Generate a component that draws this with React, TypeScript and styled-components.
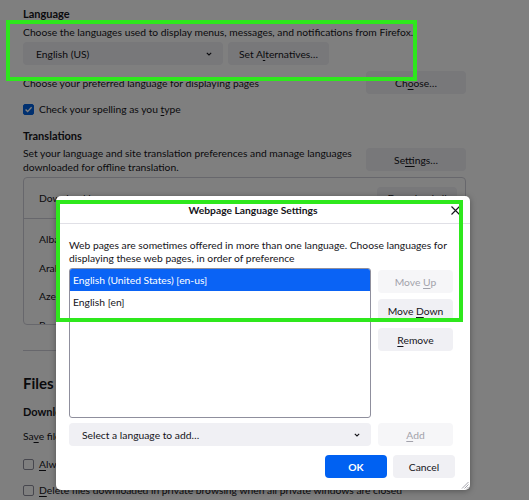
import React from "react";
import styled, { createGlobalStyle } from "styled-components";

const GlobalStyle = createGlobalStyle`
  html, body { margin: 0; padding: 0; background: #fff; }
  body {
    font-family: Lato, "Open Sans", sans-serif;
    font-size: 10.3px;
    color: #15141a;
    width: 529px;
    height: 500px;
    overflow: hidden;
  }
  * { box-sizing: border-box; }
`;

const Page = styled.div`
  position: relative;
  width: 529px;
  height: 500px;
  overflow: hidden;
  padding: 5px 63px 0 23px;
  white-space: nowrap;
`;

const Heading = styled.h2<{ $top?: number; $size?: number; $lh?: number }>`
  margin: ${(p) => p.$top ?? 0}px 0 0;
  font-size: ${(p) => p.$size ?? 11}px;
  font-weight: 700;
  line-height: ${(p) => p.$lh ?? 18}px;
`;

const Text = styled.p<{ $top?: number; $lh?: number }>`
  margin: ${(p) => p.$top ?? 0}px 0 0;
  line-height: ${(p) => p.$lh ?? 18}px;
`;

const Row = styled.div<{ $top?: number; $align?: string }>`
  display: flex;
  align-items: ${(p) => p.$align ?? "center"};
  justify-content: space-between;
  margin-top: ${(p) => p.$top ?? 0}px;
`;

const Controls = styled.div`
  display: flex;
  gap: 5px;
  margin-top: 1px;
`;

const Key = styled.span`
  text-decoration: underline;
  text-underline-offset: 2px;
`;

const Button = styled.button<{ $w?: number; $primary?: boolean; $top?: number }>`
  width: ${(p) => p.$w ?? 100}px;
  height: 23px;
  margin-top: ${(p) => p.$top ?? 0}px;
  border: none;
  border-radius: 4px;
  background: ${(p) => (p.$primary ? "#0061f2" : "#f0f0f4")};
  color: ${(p) => (p.$primary ? "#fff" : "#15141a")};
  font: inherit;
  font-weight: ${(p) => (p.$primary ? 700 : 400)};
  flex-shrink: 0;
  padding: 0;
  white-space: nowrap;
  &:disabled {
    background: #f6f6f8;
    color: #a2a2ab;
  }
`;

const Dropdown = styled.div<{ $w: number }>`
  width: ${(p) => p.$w}px;
  height: 23px;
  border-radius: 4px;
  background: #f0f0f4;
  display: flex;
  align-items: center;
  justify-content: space-between;
  padding: 0 10px 0 13px;
  flex-shrink: 0;
`;

const Chevron = () => (
  <svg width="8" height="6" viewBox="0 0 8 6">
    <path d="M1.8 1.8 L4 4 L6.2 1.8" fill="none" stroke="#15141a" strokeWidth="1.1" />
  </svg>
);

const CheckLine = styled.label<{ $top: number }>`
  display: flex;
  align-items: center;
  gap: 5px;
  margin-top: ${(p) => p.$top}px;
  line-height: 18px;
`;

const Box = styled.span<{ $checked?: boolean }>`
  width: 11px;
  height: 11px;
  border-radius: 2px;
  display: inline-flex;
  align-items: center;
  justify-content: center;
  flex-shrink: 0;
  background: ${(p) => (p.$checked ? "#0061e0" : "#fff")};
  border: 1px solid ${(p) => (p.$checked ? "#0061e0" : "#8f8f9d")};
`;

const Check = ({ checked }: { checked?: boolean }) => (
  <Box $checked={checked}>
    {checked && (
      <svg width="9" height="9" viewBox="0 0 9 9">
        <path d="M1.6 4.6 L3.6 6.6 L7.6 2.2" fill="none" stroke="#fff" strokeWidth="1.4" />
      </svg>
    )}
  </Box>
);

const LangList = styled.div`
  margin-top: 3px;
  height: 148px;
  border: 1px solid #cfcfd8;
  border-radius: 4px;
  overflow: hidden;
`;

const LangHead = styled.div`
  height: 41px;
  display: flex;
  align-items: center;
  justify-content: space-between;
  padding: 0 8px 0 15px;
  border-bottom: 1px solid #cfcfd8;
`;

const LangRows = styled.div`
  padding-top: 6px;
`;

const LangRow = styled.div`
  height: 28.5px;
  display: flex;
  align-items: center;
  justify-content: space-between;
  padding: 0 8px 0 15px;
`;

const Divider = styled.hr`
  margin: 25px 0 0;
  border: none;
  border-top: 1px solid #cfcfd8;
`;

const Shade = styled.div`
  position: absolute;
  inset: 0;
  background: rgba(0, 0, 0, 0.5);
`;

const Dialog = styled.div`
  position: absolute;
  left: 56px;
  top: 196px;
  width: 414px;
  height: 294px;
  background: #fff;
  border-radius: 5px;
  box-shadow: 0 1px 6px rgba(0, 0, 0, 0.35);
  display: flex;
  flex-direction: column;
`;

const TitleBar = styled.div`
  position: relative;
  height: 28px;
  flex-shrink: 0;
  display: flex;
  align-items: center;
  justify-content: center;
  padding-right: 20px;
  border-bottom: 1px solid #e0e0e6;
  font-weight: 700;
`;

const Close = styled.span`
  position: absolute;
  right: 10px;
  top: 10px;
  display: flex;
`;

const Body = styled.div`
  padding: 15px 17px 12px 13px;
  display: flex;
  flex-direction: column;
`;

const Grid = styled.div<{ $top: number }>`
  display: grid;
  grid-template-columns: 302px 75px;
  column-gap: 7px;
  margin-top: ${(p) => p.$top}px;
`;

const ListBox = styled.div`
  height: 150px;
  border: 1px solid #8f8f9d;
  border-radius: 3px;
  overflow: hidden;
`;

const ListItem = styled.div<{ $selected?: boolean }>`
  height: 22px;
  display: flex;
  align-items: center;
  padding-left: 3px;
  background: ${(p) => (p.$selected ? "#0a63f5" : "transparent")};
  color: ${(p) => (p.$selected ? "#fff" : "#15141a")};
`;

const SideButtons = styled.div`
  display: flex;
  flex-direction: column;
  gap: 6px;
  padding-top: 2px;
`;

const Footer = styled.div`
  display: flex;
  justify-content: flex-end;
  gap: 6px;
  margin: 9px -2px 0 0;
`;

const Grip = styled.span`
  position: absolute;
  right: 1px;
  bottom: 1px;
  display: flex;
`;

const Highlight = styled.div<{ $x: number; $y: number; $w: number; $h: number }>`
  position: absolute;
  left: ${(p) => p.$x}px;
  top: ${(p) => p.$y}px;
  width: ${(p) => p.$w}px;
  height: ${(p) => p.$h}px;
  border: 4px solid #2ee81c;
  pointer-events: none;
`;

const languages = ["Albanian", "Arabic", "Azerbaijani", "Bosnian"];

export default function App() {
  return (
    <>
      <GlobalStyle />
      <Page>
        <Heading>Language</Heading>
        <Text>Choose the languages used to display menus, messages, and notifications from Firefox.</Text>
        <Controls>
          <Dropdown $w={200}>
            <span>English (US)</span>
            <Chevron />
          </Dropdown>
          <Button $w={101}>
            Set A<Key>l</Key>ternatives…
          </Button>
        </Controls>
        <Row $top={6}>
          <span>Choose your preferred language for displaying pages</span>
          <Button>
            Ch<Key>o</Key>ose…
          </Button>
        </Row>
        <CheckLine $top={6}>
          <Check checked />
          <span>
            Check your spelling as you <Key>t</Key>ype
          </span>
        </CheckLine>
        <Heading $top={9}>Translations</Heading>
        <Row $top={1} $align="flex-start">
          <Text $lh={14}>
            Set your language and site translation preferences and manage languages
            <br />
            downloaded for offline translation.
          </Text>
          <Button $top={2}>
            Se<Key>t</Key>tings…
          </Button>
        </Row>
        <LangList>
          <LangHead>
            <span>Download languages</span>
            <Button $w={80}>Download all</Button>
          </LangHead>
          <LangRows>
            {languages.map((l) => (
              <LangRow key={l}>
                <span>{l}</span>
                <Button $w={80}>Download</Button>
              </LangRow>
            ))}
          </LangRows>
        </LangList>
        <Divider />
        <Heading $top={20} $size={15} $lh={24}>
          Files and Applications
        </Heading>
        <Heading $top={8}>Downloads</Heading>
        <Text $top={6}>
          Sa<Key>v</Key>e files to
        </Text>
        <CheckLine $top={10}>
          <Check />
          <span>
            <Key>A</Key>lways ask you where to save files
          </span>
        </CheckLine>
        <CheckLine $top={8}>
          <Check />
          <span>
            <Key>D</Key>elete files downloaded in private browsing when all private windows are closed
          </span>
        </CheckLine>

        <Shade />

        <Dialog>
          <TitleBar>
            Webpage Language Settings
            <Close>
              <svg width="9" height="9" viewBox="0 0 9 9">
                <path d="M0.5 0.5 L8.5 8.5 M8.5 0.5 L0.5 8.5" stroke="#15141a" strokeWidth="1.1" />
              </svg>
            </Close>
          </TitleBar>
          <Body>
            <Text $lh={13}>
              Web pages are sometimes offered in more than one language. Choose languages for
              <br />
              displaying these web pages, in order of preference
            </Text>
            <Grid $top={3}>
              <ListBox>
                <ListItem $selected>English (United States) [en-us]</ListItem>
                <ListItem>English [en]</ListItem>
              </ListBox>
              <SideButtons>
                <Button $w={75} disabled>
                  Move <Key>U</Key>p
                </Button>
                <Button $w={75}>
                  Move <Key>D</Key>own
                </Button>
                <Button $w={75}>
                  <Key>R</Key>emove
                </Button>
              </SideButtons>
            </Grid>
            <Grid $top={5}>
              <Dropdown $w={302}>
                <span>Select a language to add…</span>
                <Chevron />
              </Dropdown>
              <Button $w={75} disabled>
                <Key>A</Key>dd
              </Button>
            </Grid>
            <Footer>
              <Button $w={62} $primary>
                OK
              </Button>
              <Button $w={62}>Cancel</Button>
            </Footer>
          </Body>
          <Grip>
            <svg width="8" height="8" viewBox="0 0 8 8">
              <path d="M7.5 1 L1 7.5 M7.5 3.5 L3.5 7.5 M7.5 6 L6 7.5" stroke="#9a9aa3" strokeWidth="0.9" />
            </svg>
          </Grip>
        </Dialog>

        <Highlight $x={6} $y={20} $w={411} $h={61} />
        <Highlight $x={56} $y={200} $w={407} $h={122} />
      </Page>
    </>
  );
}
